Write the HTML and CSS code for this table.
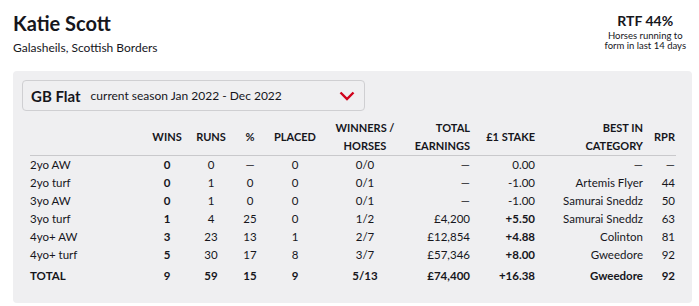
FILE: index.html
```html
<!DOCTYPE html>
<html lang="en">
<head>
<meta charset="utf-8">
<title>Katie Scott</title>
<link rel="stylesheet" href="styles.css">
</head>
<body>
<div class="page">
  <header class="head">
    <div class="who">
      <h1 class="name">Katie Scott</h1>
      <div class="loc">Galasheils, Scottish Borders</div>
    </div>
    <div class="rtf">
      <div class="rtf-val">RTF 44%</div>
      <div class="rtf-note">Horses running to<br>form in last 14 days</div>
    </div>
  </header>

  <section class="panel">
    <div class="select">
      <span class="sel-title">GB Flat</span>
      <span class="sel-sub">current season Jan 2022 - Dec 2022</span>
      <svg class="chev" width="16" height="10" viewBox="0 0 16 10"><path d="M1.5 1.5 L8 8 L14.5 1.5" fill="none" stroke="#d0021b" stroke-width="2.4"/></svg>
    </div>

    <table class="stats">
      <colgroup>
        <col class="c-label"><col class="c-wins"><col class="c-runs"><col class="c-pct"><col class="c-placed"><col class="c-wh"><col class="c-earn"><col class="c-stake"><col class="c-best"><col class="c-rpr">
      </colgroup>
      <thead>
        <tr>
          <th></th>
          <th class="ctr">WINS</th>
          <th class="ctr">RUNS</th>
          <th class="ctr">%</th>
          <th class="ctr">PLACED</th>
          <th class="ctr">WINNERS /<br>HORSES</th>
          <th class="rgt">TOTAL<br>EARNINGS</th>
          <th class="rgt">£1 STAKE</th>
          <th class="rgt">BEST IN<br>CATEGORY</th>
          <th class="rgt">RPR</th>
        </tr>
      </thead>
      <tbody>
        <tr><td>2yo AW</td><td class="ctr b">0</td><td class="ctr">0</td><td class="ctr">—</td><td class="ctr">0</td><td class="ctr">0/0</td><td class="rgt">—</td><td class="rgt">0.00</td><td class="rgt">—</td><td class="rgt">—</td></tr>
        <tr><td>2yo turf</td><td class="ctr b">0</td><td class="ctr">1</td><td class="ctr">0</td><td class="ctr">0</td><td class="ctr">0/1</td><td class="rgt">—</td><td class="rgt">-1.00</td><td class="rgt">Artemis Flyer</td><td class="rgt">44</td></tr>
        <tr><td>3yo AW</td><td class="ctr b">0</td><td class="ctr">1</td><td class="ctr">0</td><td class="ctr">0</td><td class="ctr">0/1</td><td class="rgt">—</td><td class="rgt">-1.00</td><td class="rgt">Samurai Sneddz</td><td class="rgt">50</td></tr>
        <tr><td>3yo turf</td><td class="ctr b">1</td><td class="ctr">4</td><td class="ctr">25</td><td class="ctr">0</td><td class="ctr">1/2</td><td class="rgt">£4,200</td><td class="rgt b">+5.50</td><td class="rgt">Samurai Sneddz</td><td class="rgt">63</td></tr>
        <tr><td>4yo+ AW</td><td class="ctr b">3</td><td class="ctr">23</td><td class="ctr">13</td><td class="ctr">1</td><td class="ctr">2/7</td><td class="rgt">£12,854</td><td class="rgt b">+4.88</td><td class="rgt">Colinton</td><td class="rgt">81</td></tr>
        <tr><td>4yo+ turf</td><td class="ctr b">5</td><td class="ctr">30</td><td class="ctr">17</td><td class="ctr">8</td><td class="ctr">3/7</td><td class="rgt">£57,346</td><td class="rgt b">+8.00</td><td class="rgt">Gweedore</td><td class="rgt">92</td></tr>
      </tbody>
      <tfoot>
        <tr><td>TOTAL</td><td class="ctr">9</td><td class="ctr">59</td><td class="ctr">15</td><td class="ctr">9</td><td class="ctr">5/13</td><td class="rgt">£74,400</td><td class="rgt">+16.38</td><td class="rgt">Gweedore</td><td class="rgt">92</td></tr>
      </tfoot>
    </table>
  </section>
</div>
</body>
</html>
```

FILE: styles.css
```css
* { box-sizing: border-box; }
html, body { margin: 0; padding: 0; background: #fff; }
body {
  font-family: Lato, "Open Sans", "Liberation Sans", sans-serif;
  color: #16161c;
}
.page { padding: 0 7px 0 13px; }
.head {
  display: flex;
  justify-content: space-between;
  align-items: flex-start;
  padding: 11px 6px 0 0;
  height: 71px;
}
.name {
  margin: 0;
  font-size: 20px;
  line-height: 24px;
  font-weight: 700;
}
.loc {
  margin-top: 6px;
  font-size: 12px;
  line-height: 14px;
}
.rtf { text-align: center; padding-top: 2px; }
.rtf-val { font-size: 14px; font-weight: 700; line-height: 16px; }
.rtf-note { font-size: 9.5px; line-height: 10px; margin-top: 2px; }

.panel {
  background: #efeff1;
  border-radius: 4px;
  padding: 9px 16px 16px 9px;
  height: 232px;
}
.select {
  width: 343px;
  height: 31px;
  border: 1px solid #cfcfd2;
  border-radius: 4px;
  display: flex;
  align-items: center;
  padding: 0 8px 0 8px;
}
.sel-title { font-size: 15px; font-weight: 700; }
.sel-sub { font-size: 12px; margin-left: 10px; }
.chev { margin-left: auto; margin-right: 1px; }

.stats {
  margin: 8px 0 0 8px;
  width: 646px;
  border-collapse: collapse;
  table-layout: fixed;
  font-size: 11.5px;
}
.c-label { width: 117px; }
.c-wins { width: 40px; }
.c-runs { width: 48px; }
.c-pct { width: 30px; }
.c-placed { width: 60px; }
.c-wh { width: 80px; }
.c-earn { width: 65px; }
.c-stake { width: 65px; }
.c-best { width: 108px; }
.c-rpr { width: 33px; }

.stats th {
  font-size: 11px;
  font-weight: 700;
  line-height: 18px;
  padding: 0;
  vertical-align: middle;
  border-bottom: 1px solid #c9c9cc;
  white-space: nowrap;
}
.stats td {
  padding: 0;
  height: 18px;
  line-height: 18px;
  white-space: nowrap;
  text-align: left;
}
.stats .ctr { text-align: center; }
.stats .rgt { text-align: right; }
.stats th.rgt:last-child, .stats td.rgt:last-child { padding-right: 1px; }
.stats .b { font-weight: 700; }
.stats tfoot td { font-weight: 700; height: 24px; padding-top: 3px; padding-bottom: 3px; line-height: 18px; }
```
